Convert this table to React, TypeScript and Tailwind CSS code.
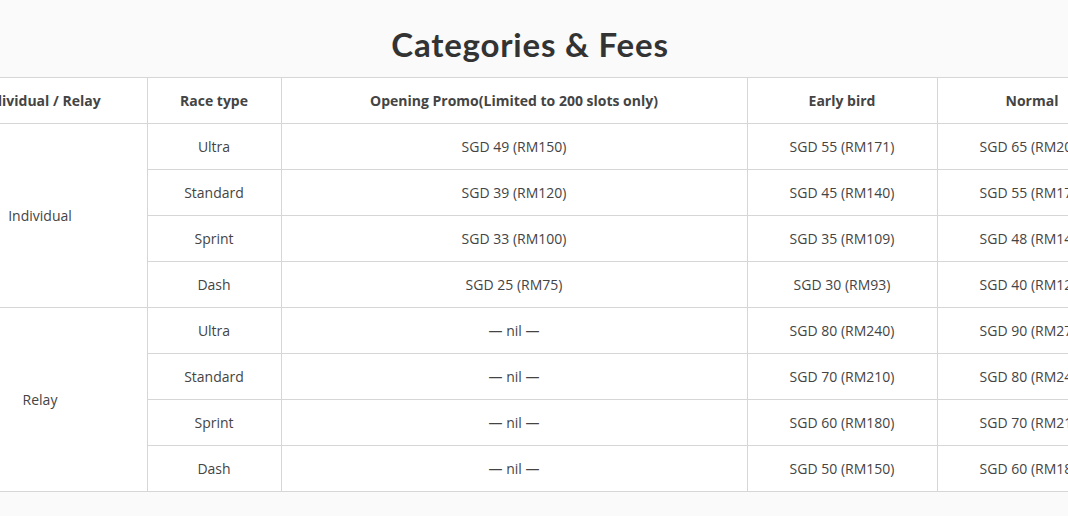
import React from "react";

type Row = { race: string; promo: string; early: string; normal: string };

const individual: Row[] = [
  { race: "Ultra", promo: "SGD 49 (RM150)", early: "SGD 55 (RM171)", normal: "SGD 65 (RM200)" },
  { race: "Standard", promo: "SGD 39 (RM120)", early: "SGD 45 (RM140)", normal: "SGD 55 (RM171)" },
  { race: "Sprint", promo: "SGD 33 (RM100)", early: "SGD 35 (RM109)", normal: "SGD 48 (RM149)" },
  { race: "Dash", promo: "SGD 25 (RM75)", early: "SGD 30 (RM93)", normal: "SGD 40 (RM124)" },
];

const relay: Row[] = [
  { race: "Ultra", promo: "— nil —", early: "SGD 80 (RM240)", normal: "SGD 90 (RM270)" },
  { race: "Standard", promo: "— nil —", early: "SGD 70 (RM210)", normal: "SGD 80 (RM240)" },
  { race: "Sprint", promo: "— nil —", early: "SGD 60 (RM180)", normal: "SGD 70 (RM210)" },
  { race: "Dash", promo: "— nil —", early: "SGD 50 (RM150)", normal: "SGD 60 (RM180)" },
];

const cell = "h-[46px] border border-[#d6d6d6] text-center align-middle p-0";

function Group({ label, rows }: { label: string; rows: Row[] }) {
  return (
    <>
      {rows.map((r, i) => (
        <tr key={r.race}>
          {i === 0 && (
            <td rowSpan={rows.length} className={cell}>
              {label}
            </td>
          )}
          <td className={cell}>{r.race}</td>
          <td className={cell}>{r.promo}</td>
          <td className={cell}>{r.early}</td>
          <td className={cell}>{r.normal}</td>
        </tr>
      ))}
    </>
  );
}

export default function App() {
  return (
    <div className="w-[1068px] h-[516px] overflow-hidden bg-[#fafafa]">
      <h1 className="h-[77px] pt-[24px] text-center text-[33px] leading-[40px] tracking-[0.8px] font-bold text-[#333] font-['Lato',sans-serif] pr-2">
        Categories &amp; Fees
      </h1>
      <div className="flex justify-center pr-2">
        <table className="shrink-0 w-[1194px] table-fixed border-collapse bg-white text-[14px] text-[#444] font-['Open_Sans',sans-serif]">
          <colgroup>
            <col className="w-[214px]" />
            <col className="w-[134px]" />
            <col className="w-[466px]" />
            <col className="w-[190px]" />
            <col className="w-[190px]" />
          </colgroup>
          <thead>
            <tr className="font-bold">
              <th className={cell}>Individual / Relay</th>
              <th className={cell}>Race type</th>
              <th className={cell}>Opening Promo(Limited to 200 slots only)</th>
              <th className={cell}>Early bird</th>
              <th className={cell}>Normal</th>
            </tr>
          </thead>
          <tbody>
            <Group label="Individual" rows={individual} />
            <Group label="Relay" rows={relay} />
          </tbody>
        </table>
      </div>
    </div>
  );
}
